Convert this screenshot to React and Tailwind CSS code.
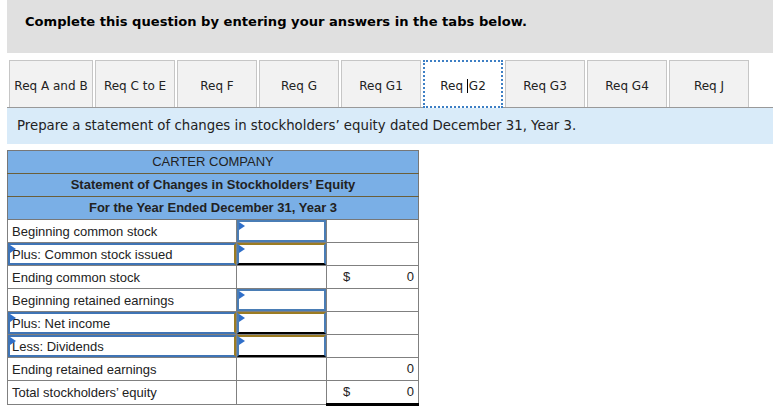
import React from 'react';

const tabs = ['Req A and B', 'Req C to E', 'Req F', 'Req G', 'Req G1', 'Req G2', 'Req G3', 'Req G4', 'Req J'];

function Flag() {
  return (
    <span className="absolute left-0 top-0 w-0 h-0 border-t-[4px] border-b-[4px] border-l-[6px] border-t-transparent border-b-transparent border-l-[#2f6fc9]" />
  );
}

function InputCell({ top = 'blue' }) {
  return (
    <td className="p-0 border border-[#808080]">
      <div
        className={`relative h-[22px] border-2 border-[#4a7db5] ${top === 'gold' ? 'border-t-[#9c7c22] border-b-black' : ''}`}
      >
        <Flag />
      </div>
    </td>
  );
}

const rows = [
  { label: 'Beginning common stock', input: 'blue' },
  { label: 'Plus: Common stock issued', input: 'gold', boxed: true },
  { label: 'Ending common stock', dollar: true, value: '0' },
  { label: 'Beginning retained earnings', input: 'blue' },
  { label: 'Plus: Net income', input: 'gold', boxed: true },
  { label: 'Less: Dividends', input: 'gold', boxed: true },
  { label: 'Ending retained earnings', value: '0' },
  { label: 'Total stockholders\u2019 equity', dollar: true, value: '0', total: true },
];

export default function App() {
  return (
    <div className="w-[773px] h-[410px] bg-white overflow-hidden font-['DejaVu_Sans',Verdana,sans-serif] text-[#222]">
      <div className="ml-[7px] h-[53px] bg-[#e0e0e0] pl-[18px] pt-[12px]">
        <p className="text-[13.1px] font-bold text-black">
          Complete this question by entering your answers in the tabs below.
        </p>
      </div>

      <div className="ml-[7px] mt-[7px] h-[48px] flex items-stretch gap-[2px] pl-[2px] border-b border-[#999]">
        {tabs.map((t, i) => (
          <div
            key={t}
            className={`${i === 0 ? 'w-[84px]' : 'w-[80px]'} flex items-center justify-center pt-[3px] text-[12px] ${
              i === 5
                ? 'bg-white border-2 border-dotted border-[#3d7fc4] -mb-[1px]'
                : 'bg-[#f2f2f2] border border-b-0 border-[#c6c6c6]'
            }`}
          >
            {i === 5 ? (
              <span>
                Req <span className="border-l border-black pl-[1px]">G2</span>
              </span>
            ) : (
              t
            )}
          </div>
        ))}
      </div>

      <div className="ml-[7px] h-[36px] bg-[#d9ebf9] flex items-center pl-[10px] text-[13.3px] text-[#222]">
        Prepare a statement of changes in stockholders’ equity dated December 31, Year 3.
      </div>

      <table className="ml-[7px] mt-[6px] border-collapse font-['Liberation_Sans',Arial,sans-serif] text-[13px] text-[#222] table-fixed w-[411px]">
        <colgroup>
          <col className="w-[229px]" />
          <col className="w-[90px]" />
          <col className="w-[92px]" />
        </colgroup>
        <thead>
          <tr className="bg-[#7aafe6]">
            <th colSpan={3} className="p-0 h-[23px] border border-[#777] border-b-[#6b5f3a] font-normal text-center text-[13px]">
              CARTER COMPANY
            </th>
          </tr>
          <tr className="bg-[#7aafe6]">
            <th colSpan={3} className="p-0 h-[23px] border border-[#777] border-b-[#6b5f3a] font-bold text-center">
              Statement of Changes in Stockholders’ Equity
            </th>
          </tr>
          <tr className="bg-[#7aafe6]">
            <th colSpan={3} className="p-0 h-[23px] border border-[#777] font-bold text-center">
              For the Year Ended December 31, Year 3
            </th>
          </tr>
        </thead>
        <tbody>
          {rows.map((r) => (
            <tr key={r.label}>
              <td className="p-0 border border-[#808080]">
                {r.boxed ? (
                  <div className="relative h-[22px] border-2 border-[#3f74b5] border-r-[#9c7c22] pl-[2px] flex items-center leading-none">
                    <Flag />
                    {r.label}
                  </div>
                ) : (
                  <div className="h-[22px] pl-[4px] flex items-center leading-none">{r.label}</div>
                )}
              </td>
              {r.input ? (
                <InputCell top={r.input} />
              ) : (
                <td className="p-0 border border-[#808080]" />
              )}
              <td className={`p-0 border border-[#808080] ${r.total ? 'border-t-black border-b-[3px] border-b-double border-b-black' : ''}`}>
                <div className="h-[22px] flex items-center justify-between px-[6px] pr-[4px]">
                  <span className="pl-[10px]">{r.dollar ? '$' : ''}</span>
                  <span>{r.value || ''}</span>
                </div>
              </td>
            </tr>
          ))}
        </tbody>
      </table>
    </div>
  );
}
